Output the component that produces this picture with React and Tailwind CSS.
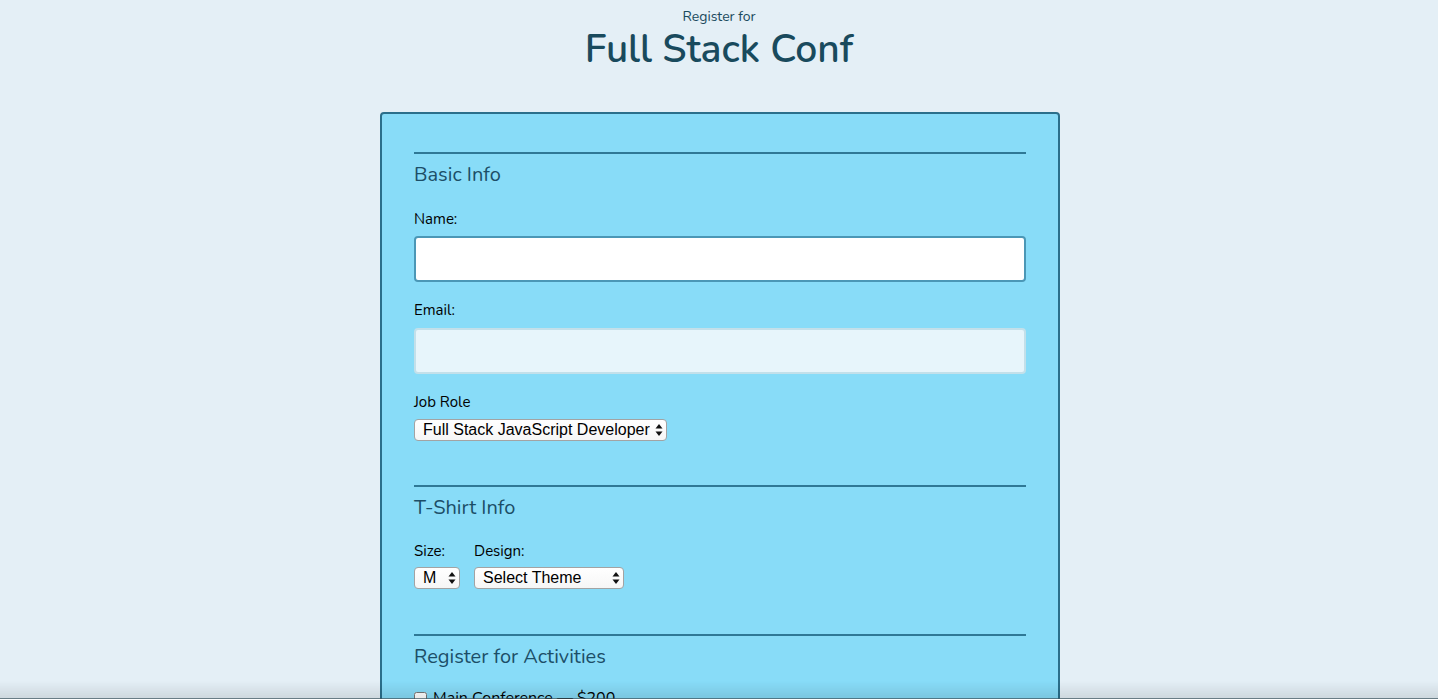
import { useState } from "react";

const Arrows = () => (
  <svg width="8" height="13" viewBox="0 0 8 13" className="pointer-events-none absolute right-[4px] top-1/2 -translate-y-1/2">
    <path d="M4 0.5 L7.5 5 L0.5 5 Z" fill="#111" />
    <path d="M4 12.5 L7.5 8 L0.5 8 Z" fill="#111" />
  </svg>
);

const Select = ({ width, value, options }) => (
  <div className={`relative ${width}`}>
    <select
      defaultValue={value}
      className="h-[22px] w-full appearance-none rounded-[4px] border border-[#a3a3a3] bg-gradient-to-b from-white to-[#f6f6f6] pl-[8px] pr-4 font-['Liberation_Sans',Arial,sans-serif] text-[16px] leading-[20px] text-black outline-none"
    >
      {options.map((o) => (
        <option key={o}>{o}</option>
      ))}
    </select>
    <Arrows />
  </div>
);

const Legend = ({ children }) => (
  <>
    <div className="h-[2px] bg-[#2f7896]" />
    <h2 className="mt-[9px] text-[20px] leading-[24px] text-[#1c4e67]">{children}</h2>
  </>
);

export default function App() {
  const [name, setName] = useState("");
  const [email, setEmail] = useState("");

  return (
    <div className="min-h-screen bg-[#e4eff6] pb-20 font-['Nunito','Lato',sans-serif] text-[#1c4e67]">
      <header className="pt-2 text-center text-[#194a5d]">
        <p className="text-[14px] leading-[18px]">Register for</p>
        <h1 className="text-[39px] font-semibold leading-[48px]">Full Stack Conf</h1>
      </header>

      <div className="mt-[38px] pl-[2px]">
        <form className="mx-auto w-[680px] rounded-[4px] border-2 border-[#2b6f8b] bg-[#88dcf8] px-[32px] pb-10 pt-[38px]">
          <fieldset>
            <Legend>Basic Info</Legend>

            <label htmlFor="name" className="mt-[22px] block text-[15px] leading-[20px] text-black">Name:</label>
            <input
              id="name"
              type="text"
              value={name}
              onChange={(e) => setName(e.target.value)}
              className="mt-[7px] block h-[46px] w-full rounded-[4px] border-2 border-[#4b97b6] bg-white px-3 outline-none"
            />

            <label htmlFor="mail" className="mt-[18px] block text-[15px] leading-[20px] text-black">Email:</label>
            <input
              id="mail"
              type="email"
              value={email}
              onChange={(e) => setEmail(e.target.value)}
              className="mt-2 block h-[46px] w-full rounded-[4px] border-2 border-[#c3e0ea] bg-[#e7f5fb] px-3 outline-none"
            />

            <label className="mt-[18px] block text-[15px] leading-[20px] text-black">Job Role</label>
            <div className="mt-[6px]">
              <Select
                width="w-[253px]"
                value="Full Stack JavaScript Developer"
                options={["Full Stack JavaScript Developer", "Front End Developer", "Back End Developer", "Designer", "Student", "Other"]}
              />
            </div>
          </fieldset>

          <fieldset className="mt-[43px]">
            <Legend>T-Shirt Info</Legend>

            <div className="mt-[21px] flex gap-[14px]">
              <div>
                <label className="block text-[15px] leading-[20px] text-black">Size:</label>
                <div className="mt-[5px]">
                  <Select width="w-[46px]" value="M" options={["S", "M", "L", "XL"]} />
                </div>
              </div>
              <div>
                <label className="block text-[15px] leading-[20px] text-black">Design:</label>
                <div className="mt-[5px]">
                  <Select width="w-[150px]" value="Select Theme" options={["Select Theme", "Theme - JS Puns", "Theme - I ♥ JS"]} />
                </div>
              </div>
            </div>
          </fieldset>

          <fieldset className="mt-[44px]">
            <Legend>Register for Activities</Legend>

            <div className="mt-[19px] flex flex-col gap-2 text-[16px] leading-[20px] text-black">
              {[
                ["Main Conference", "$200"],
                ["JavaScript Frameworks Workshop", "Tuesday 9am-12pm, $100"],
                ["JavaScript Libraries Workshop", "Tuesday 1pm-4pm, $100"],
                ["Express Workshop", "Tuesday 9am-12pm, $100"],
                ["Node.js Workshop", "Tuesday 1pm-4pm, $100"],
              ].map(([t, p]) => (
                <label key={t} className="flex items-center">
                  <input type="checkbox" className="mr-[6px] h-[13px] w-[13px]" />
                  {t}
                  <span className="mx-[4px]">—</span>
                  {p}
                </label>
              ))}
            </div>
          </fieldset>
        </form>
      </div>

      <div className="pointer-events-none fixed inset-x-0 bottom-0 h-[18px] bg-gradient-to-b from-transparent to-black/10" />
      <div className="pointer-events-none fixed inset-x-0 bottom-0 h-px bg-[#3d5560]/70" />
    </div>
  );
}
